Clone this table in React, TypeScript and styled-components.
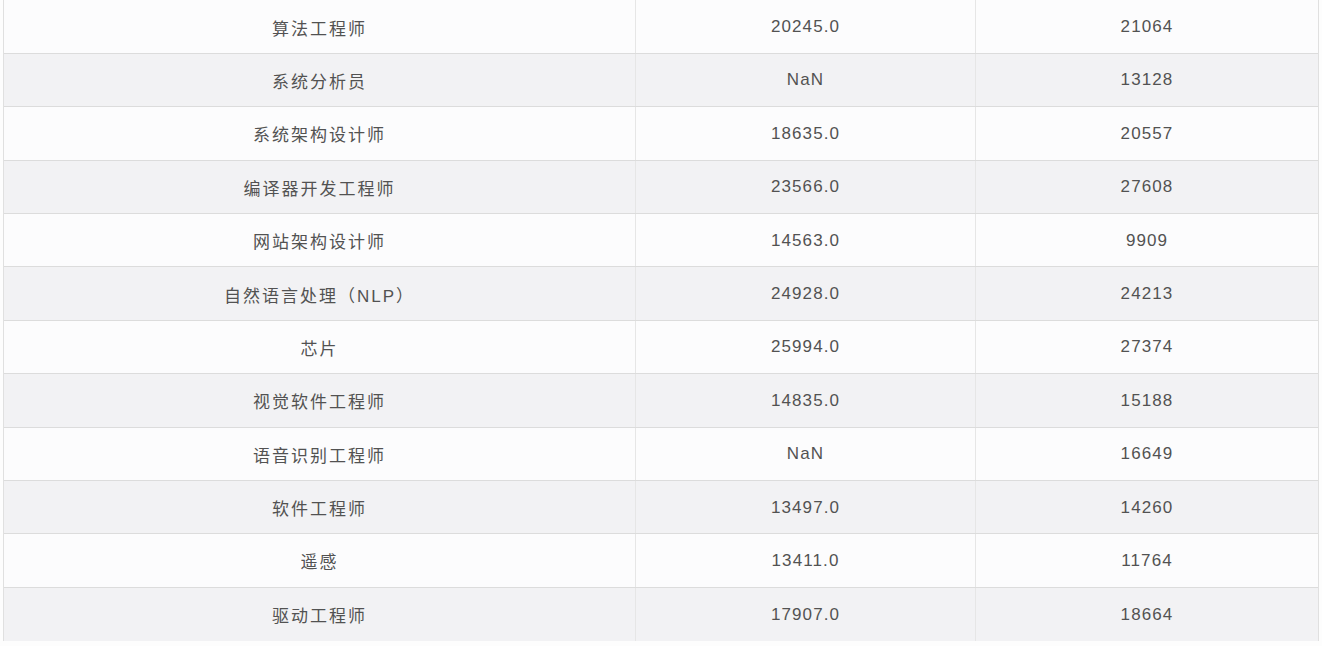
import React from "react";
import styled, { createGlobalStyle } from "styled-components";

const Global = createGlobalStyle`
  html, body {
    margin: 0;
    padding: 0;
    background: #fdfdfd;
  }
  body {
    font-family: "Liberation Sans", "Noto Sans CJK SC", sans-serif;
  }
`;

const Page = styled.div`
  width: 1322px;
  height: 646px;
  overflow: hidden;
  background: #fdfdfd;
`;

const Table = styled.div`
  margin-top: 0.4px;
  margin-left: 3px;
  width: 1316px;
  border-left: 1px solid #e0e0e0;
  border-right: 1px solid #e0e0e0;
  box-sizing: border-box;
`;

const Row = styled.div<{ $alt: boolean; $last: boolean }>`
  display: grid;
  grid-template-columns: 632px 340px 1fr;
  height: 53.4px;
  box-sizing: border-box;
  background: ${(p) => (p.$alt ? "#f2f2f4" : "#fcfcfd")};
  border-bottom: ${(p) => (p.$last ? "none" : "1px solid #dcdcdc")};
`;

const Cell = styled.div<{ $name?: boolean }>`
  display: flex;
  align-items: center;
  justify-content: center;
  padding-top: 1px;
  color: #525252;
  font-size: 17px;
  font-family: "Liberation Sans", "Noto Sans CJK SC", sans-serif;
  letter-spacing: ${(p) => (p.$name ? "2px" : "1.1px")};
  border-right: 1px solid #e6e6e6;
  &:last-child {
    border-right: none;
  }
`;

const rows: [string, string, string][] = [
  ["算法工程师", "20245.0", "21064"],
  ["系统分析员", "NaN", "13128"],
  ["系统架构设计师", "18635.0", "20557"],
  ["编译器开发工程师", "23566.0", "27608"],
  ["网站架构设计师", "14563.0", "9909"],
  ["自然语言处理（NLP）", "24928.0", "24213"],
  ["芯片", "25994.0", "27374"],
  ["视觉软件工程师", "14835.0", "15188"],
  ["语音识别工程师", "NaN", "16649"],
  ["软件工程师", "13497.0", "14260"],
  ["遥感", "13411.0", "11764"],
  ["驱动工程师", "17907.0", "18664"],
];

export default function App() {
  return (
    <Page>
      <Global />
      <Table>
        {rows.map((r, i) => (
          <Row key={r[0]} $alt={i % 2 === 1} $last={i === rows.length - 1}>
            <Cell $name>{r[0]}</Cell>
            <Cell>{r[1]}</Cell>
            <Cell>{r[2]}</Cell>
          </Row>
        ))}
      </Table>
    </Page>
  );
}
